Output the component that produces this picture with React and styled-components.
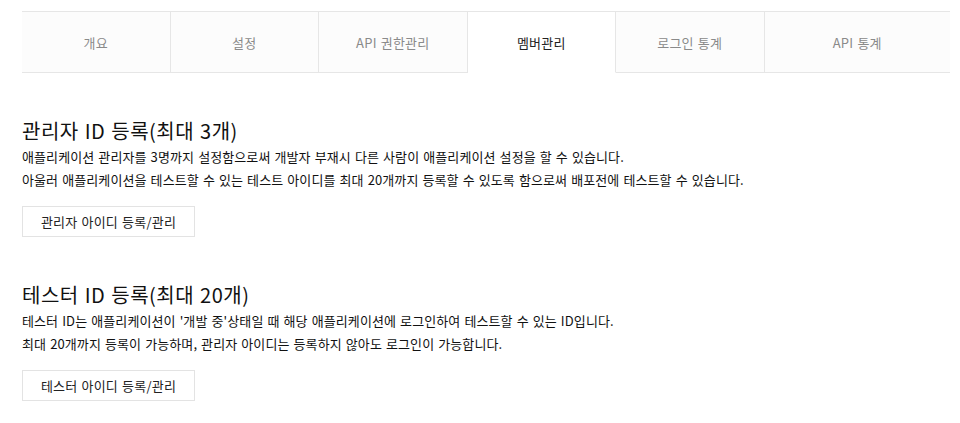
import React from "react";
import styled, { createGlobalStyle } from "styled-components";

const tabs = ["개요", "설정", "API 권한관리", "멤버관리", "로그인 통계", "API 통계"];

const sections = [
  {
    title: "관리자 ID 등록(최대 3개)",
    lines: [
      "애플리케이션 관리자를 3명까지 설정함으로써 개발자 부재시 다른 사람이 애플리케이션 설정을 할 수 있습니다.",
      "아울러 애플리케이션을 테스트할 수 있는 테스트 아이디를 최대 20개까지 등록할 수 있도록 함으로써 배포전에 테스트할 수 있습니다.",
    ],
    button: "관리자 아이디 등록/관리",
  },
  {
    title: "테스터 ID 등록(최대 20개)",
    lines: [
      "테스터 ID는 애플리케이션이 '개발 중'상태일 때 해당 애플리케이션에 로그인하여 테스트할 수 있는 ID입니다.",
      "최대 20개까지 등록이 가능하며, 관리자 아이디는 등록하지 않아도 로그인이 가능합니다.",
    ],
    button: "테스터 아이디 등록/관리",
  },
];

const App = () => {
  return (
    <>
      <GlobalStyle />
      <Page>
        <TabBar>
          {tabs.map((t, i) => (
            <Tab key={t} $active={i === 3} $last={i === tabs.length - 1}>
              {t}
            </Tab>
          ))}
        </TabBar>
        {sections.map((s) => (
          <Section key={s.title}>
            <Title>{s.title}</Title>
            {s.lines.map((l) => (
              <Desc key={l}>{l}</Desc>
            ))}
            <Button>{s.button}</Button>
          </Section>
        ))}
      </Page>
    </>
  );
};

export default App;

const GlobalStyle = createGlobalStyle`
  body {
    margin: 0;
    background: #fff;
    font-family: "Noto Sans CJK KR", "Noto Sans", sans-serif;
    color: #111;
  }
`;

const Page = styled.div`
  width: 928px;
  margin-left: 22px;
  padding-top: 11px;
`;

const TabBar = styled.div`
  display: flex;
  border-top: 1px solid #e6e6e6;
`;

const Tab = styled.div`
  flex: ${(p) => (p.$last ? "1 1 auto" : "0 0 148.5px")};
  box-sizing: border-box;
  height: 61px;
  display: flex;
  align-items: center;
  justify-content: center;
  font-size: 13px;
  letter-spacing: 0.2px;
  word-spacing: 1px;
  color: ${(p) => (p.$active ? "#222" : "#8a8a8a")};
  background: ${(p) => (p.$active ? "#fff" : "#fcfcfc")};
  border-right: ${(p) => (p.$last ? "none" : "1px solid #e6e6e6")};
  border-bottom: 1px solid ${(p) => (p.$active ? "transparent" : "#e6e6e6")};
`;

const Section = styled.section`
  margin-top: 44px;
`;

const Title = styled.h2`
  margin: 0;
  font-size: 20px;
  line-height: 28px;
  font-weight: 400;
  letter-spacing: 0.5px;
  word-spacing: 1px;
  color: #111;
`;

const Desc = styled.p`
  margin: 0;
  font-size: 13px;
  line-height: 23px;
  letter-spacing: 0.1px;
  word-spacing: 1px;
  color: #111;
`;

const Button = styled.button`
  margin-top: 15px;
  width: 173px;
  height: 31px;
  box-sizing: border-box;
  background: #fff;
  border: 1px solid #e3e3e3;
  font-family: inherit;
  font-size: 13px;
  letter-spacing: 0.2px;
  word-spacing: 1px;
  color: #222;
  cursor: pointer;
  display: block;
`;
